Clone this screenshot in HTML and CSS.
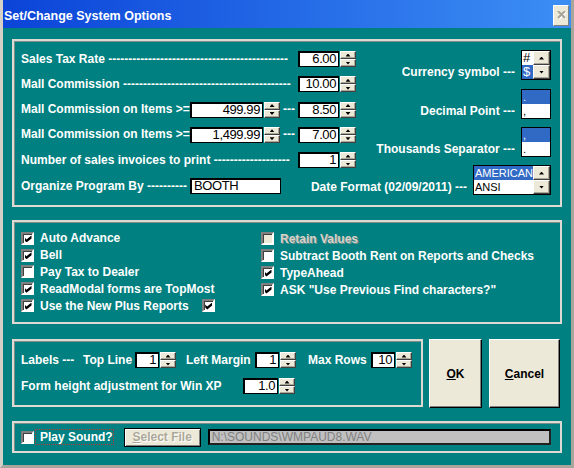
FILE: index.html
```html
<!DOCTYPE html>
<html lang="en">

<head>
    <meta charset="UTF-8">
    <meta name="viewport" content="width=device-width, initial-scale=1.0">
    <title>Set/Change System Options</title>
    <link rel="stylesheet" href="styles.css">
</head>

<body>
    <div class="window">
        <!-- 標題列 -->
        <div class="title-bar">
            <span class="title">Set/Change System Options</span>
            <button type="button" class="close-btn">
                <svg width="9" height="8" viewBox="0 0 9 8">
                    <path d="M1 1 L8 8 M8 1 L1 8" stroke="#fff" stroke-width="2" transform="translate(1 0)" />
                    <path d="M1 0 L8 7 M8 0 L1 7" stroke="#a7a49a" stroke-width="2" />
                </svg>
            </button>
        </div>

        <div class="client">
            <!-- 稅率 / 佣金 -->
            <div class="panel rates">
                <div class="rates-top">
                    <div class="rate-rows">
                        <div class="row">
                            <span class="lbl lbl-full">Sales Tax Rate ---------------------------------------------</span>
                            <span class="num num-s">6.00</span>
                            <span class="spin"><i class="up"></i><i class="dn"></i></span>
                        </div>
                        <div class="row">
                            <span class="lbl lbl-full">Mall Commission ------------------------------------------</span>
                            <span class="num num-s">10.00</span>
                            <span class="spin"><i class="up"></i><i class="dn"></i></span>
                        </div>
                        <div class="row">
                            <span class="lbl lbl-mid">Mall Commission on Items &gt;=</span>
                            <span class="num num-l">499.99</span>
                            <span class="spin"><i class="up"></i><i class="dn"></i></span>
                            <span class="lbl lbl-dash">---</span>
                            <span class="num num-s">8.50</span>
                            <span class="spin"><i class="up"></i><i class="dn"></i></span>
                        </div>
                        <div class="row">
                            <span class="lbl lbl-mid">Mall Commission on Items &gt;=</span>
                            <span class="num num-l">1,499.99</span>
                            <span class="spin"><i class="up"></i><i class="dn"></i></span>
                            <span class="lbl lbl-dash">---</span>
                            <span class="num num-s">7.00</span>
                            <span class="spin"><i class="up"></i><i class="dn"></i></span>
                        </div>
                        <div class="row">
                            <span class="lbl lbl-full">Number of sales invoices to print -------------------</span>
                            <span class="num num-s">1</span>
                            <span class="spin"><i class="up"></i><i class="dn"></i></span>
                        </div>
                    </div>

                    <div class="sep-col">
                        <div class="sep-row">
                            <span class="lbl">Currency symbol ---</span>
                            <div class="list list-s">
                                <div class="items items-big">
                                    <div>#</div>
                                    <div class="sel">$</div>
                                </div>
                                <div class="vscroll"><i class="up"></i><i class="dn"></i></div>
                            </div>
                        </div>
                        <div class="sep-row">
                            <span class="lbl">Decimal Point ---</span>
                            <div class="list list-s">
                                <div class="items">
                                    <div class="sel">.</div>
                                    <div>,</div>
                                </div>
                            </div>
                        </div>
                        <div class="sep-row">
                            <span class="lbl">Thousands Separator ---</span>
                            <div class="list list-s">
                                <div class="items">
                                    <div class="sel">,</div>
                                    <div>.</div>
                                </div>
                            </div>
                        </div>
                    </div>
                </div>

                <div class="rates-bottom">
                    <div class="row organize">
                        <span class="lbl lbl-mid">Organize Program By ----------</span>
                        <span class="text-box">BOOTH</span>
                    </div>
                    <div class="sep-row">
                        <span class="lbl">Date Format (02/09/2011) ---</span>
                        <div class="list list-l">
                            <div class="items">
                                <div class="sel">AMERICAN</div>
                                <div>ANSI</div>
                            </div>
                            <div class="vscroll"><i class="up"></i><i class="dn"></i></div>
                        </div>
                    </div>
                </div>
            </div>

            <!-- 勾選項目 -->
            <div class="panel checks">
                <div class="check-col col-left">
                    <label class="check"><span class="box on"></span>Auto Advance</label>
                    <label class="check"><span class="box on"></span>Bell</label>
                    <label class="check"><span class="box"></span>Pay Tax to Dealer</label>
                    <label class="check"><span class="box on"></span>ReadModal forms are TopMost</label>
                    <label class="check"><span class="box on"></span>Use the New Plus Reports<span class="box on extra"></span></label>
                </div>
                <div class="check-col">
                    <label class="check disabled"><span class="box"></span>Retain Values</label>
                    <label class="check"><span class="box"></span>Subtract Booth Rent on Reports and Checks</label>
                    <label class="check"><span class="box on"></span>TypeAhead</label>
                    <label class="check"><span class="box on"></span>ASK "Use Previous Find characters?"</label>
                </div>
            </div>

            <!-- 標籤設定 + 按鈕 -->
            <div class="bottom-row">
                <div class="panel labels">
                    <div class="row">
                        <span class="lbl lbl-labels">Labels ---</span>
                        <span class="lbl lbl-top">Top Line</span>
                        <span class="num num-xs">1</span>
                        <span class="spin"><i class="up"></i><i class="dn"></i></span>
                        <span class="lbl lbl-left">Left Margin</span>
                        <span class="num num-xs">1</span>
                        <span class="spin"><i class="up"></i><i class="dn"></i></span>
                        <span class="lbl lbl-max">Max Rows</span>
                        <span class="num num-xs">10</span>
                        <span class="spin"><i class="up"></i><i class="dn"></i></span>
                    </div>
                    <div class="row">
                        <span class="lbl lbl-form">Form height adjustment for Win XP</span>
                        <span class="num num-m">1.0</span>
                        <span class="spin"><i class="up"></i><i class="dn"></i></span>
                    </div>
                </div>
                <button type="button" class="cmd cmd-ok"><u>O</u>K</button>
                <button type="button" class="cmd cmd-cancel"><u>C</u>ancel</button>
            </div>

            <!-- 音效 -->
            <div class="panel sound">
                <span class="box"></span>
                <span class="focus">Play Sound?</span>
                <button type="button" class="select-btn"><u>S</u>elect File</button>
                <span class="path-box">N:\SOUNDS\WMPAUD8.WAV</span>
            </div>
        </div>
    </div>
</body>

</html>
```

FILE: styles.css
```css
* {
    box-sizing: border-box;
    margin: 0px;
    padding: 0px;
}

body {
    font-family: "Liberation Sans", Arial, sans-serif;
    background-color: #fff;
}

/* 視窗外框 */
.window {
    width: 574px;
    height: 468px;
    background-color: #008080;
    border: 3px solid #d4d0c8;
    border-top: 0px;
    border-right-color: #a9a59d;
    border-bottom-color: #a9a59d;
}

/* 標題列 */
.title-bar {
    height: 28px;
    display: flex;
    align-items: center;
    justify-content: space-between;
    padding: 0px 2px 0px 1px;
    background: linear-gradient(to right, #0b44d8, #3c8ef4);
}

.title {
    color: #fff;
    font-size: 12.5px;
    font-weight: bold;
    padding-top: 3px;
}

.close-btn {
    width: 16px;
    height: 21px;
    margin-top: 2px;
    display: flex;
    align-items: center;
    justify-content: center;
    background-color: #ece9d8;
    border: 1px solid;
    border-color: #fff #808080 #808080 #fff;
}

.client {
    padding: 11px 9px 12px;
}

/* 群組框 */
.panel {
    border: 2px solid #dcdad2;
    box-shadow: inset 1px 1px 0 #7d8e8c;
}

.lbl {
    color: #fff;
    font-size: 12px;
    font-weight: bold;
    line-height: 15px;
    white-space: nowrap;
    overflow: hidden;
}

.row {
    display: flex;
    align-items: center;
    height: 16px;
}

/* 數字框 */
.num,
.text-box {
    height: 16px;
    background-color: #fff;
    border-style: solid;
    border-width: 2px 1px 1px 2px;
    border-color: #000;
    font-size: 13px;
    letter-spacing: -0.4px;
    line-height: 12px;
    color: #000;
    text-align: right;
    padding-right: 2px;
}

.num-xs { width: 24px; }
.num-s { width: 41px; }
.num-m { width: 35px; }
.num-l { width: 73px; }

.text-box {
    width: 91px;
    text-align: left;
    padding-left: 2px;
}

/* 上下鈕 */
.spin {
    width: 16px;
    height: 16px;
    margin-left: 1px;
    display: flex;
    flex-direction: column;
}

.spin i,
.vscroll i {
    flex: 1;
    display: flex;
    align-items: center;
    justify-content: center;
    background-color: #ece9d8;
    border: 1px solid;
    border-color: #fff #404040 #404040 #fff;
    box-shadow: inset -1px -1px 0 #aca899;
}

.spin i::before,
.vscroll i::before {
    content: "";
    width: 5px;
    height: 3px;
    background-color: #000;
}

.up::before {
    clip-path: polygon(50% 0, 100% 100%, 0 100%);
}

.dn::before {
    clip-path: polygon(0 0, 100% 0, 50% 100%);
}

/* 稅率區 */
.rates {
    height: 168px;
    padding: 9px 9px 10px 7px;
}

.rates-top {
    display: flex;
    justify-content: space-between;
    align-items: flex-start;
}

.rate-rows {
    margin-top: 1px;
    display: flex;
    flex-direction: column;
    gap: 9.25px;
}

.lbl-full { width: 277px; }
.lbl-mid { width: 169px; }

.lbl-dash {
    width: 18px;
    padding-left: 3px;
}

.sep-col {
    display: flex;
    flex-direction: column;
    align-items: flex-end;
    gap: 8.5px;
}

.sep-row {
    display: flex;
    align-items: flex-end;
    gap: 6px;
}

.rates-bottom {
    margin-top: -3px;
    display: flex;
    justify-content: space-between;
    align-items: flex-end;
}

.organize {
    margin-bottom: 1px;
}

/* 清單框 */
.list {
    height: 30px;
    display: flex;
    background-color: #fff;
    border: 1px solid #000;
}

.list-s { width: 30px; }
.list-l { width: 78px; }

.items {
    flex: 1;
    font-size: 11px;
    line-height: 14px;
    color: #000;
}

.items-big {
    font-size: 13px;
}

.items div {
    height: 14px;
    padding-left: 1px;
}

.items .sel {
    background-color: #316ac5;
    color: #fff;
}

.vscroll {
    width: 17px;
    display: flex;
    flex-direction: column;
}

/* 勾選框 */
.checks {
    height: 104px;
    margin-top: 13px;
    padding: 8px 7px;
    display: flex;
}

.check-col {
    display: flex;
    flex-direction: column;
}

.col-left {
    width: 240px;
}

.check {
    height: 17px;
    display: flex;
    align-items: center;
    gap: 6px;
    color: #fff;
    font-size: 12px;
    font-weight: bold;
    white-space: nowrap;
}

.box {
    width: 13px;
    height: 13px;
    flex: none;
    display: flex;
    align-items: center;
    justify-content: center;
    background-color: #fff;
    border: 2px solid;
    border-color: #808080 #fff #fff #808080;
    box-shadow: inset 1px 1px 0 #404040;
}

.box.on::before {
    content: "";
    width: 7px;
    height: 7px;
    margin: 1px 0px 0px 1px;
    background-color: #000;
    clip-path: polygon(0 28%, 28% 57%, 100% 0, 100% 43%, 28% 100%, 0 71%);
}

.box.extra {
    margin-left: 7px;
}

.check.disabled {
    color: #d6d3ca;
    text-shadow: 1px 1px 0 #7f8f8d;
}

.check.disabled .box {
    background-color: #ece9d8;
}

/* 標籤設定 + 按鈕 */
.bottom-row {
    margin-top: 15px;
    height: 69px;
    display: flex;
    gap: 6px;
}

.labels {
    width: 411px;
    height: 68px;
    padding: 11px 7px 0px;
    display: flex;
    flex-direction: column;
    gap: 10px;
}

.lbl-labels { width: 62px; }
.lbl-top { width: 52px; }

.lbl-left {
    width: 69px;
    margin-left: 10px;
}

.lbl-max {
    width: 63px;
    margin-left: 12px;
}

.lbl-form { width: 222px; }

.cmd {
    height: 69px;
    background-color: #ece9d8;
    border: 1px solid;
    border-color: #fff #000 #000 #fff;
    box-shadow: inset -1px -1px 0 #808080;
    font-family: "Liberation Sans", Arial, sans-serif;
    font-size: 12px;
    font-weight: bold;
    color: #000;
}

.cmd-ok { width: 53px; }

.cmd-cancel {
    width: 71px;
    margin-left: 1px;
}

/* 音效 */
.sound {
    height: 32px;
    margin-top: 13px;
    padding: 0px 7px;
    display: flex;
    align-items: center;
}

.focus {
    height: 16px;
    margin-left: 1px;
    padding-left: 4px;
    border: 1px dotted #b03a3a;
    color: #fff;
    font-size: 12px;
    font-weight: bold;
    line-height: 14px;
}

.select-btn {
    width: 77px;
    height: 19px;
    margin-left: 10px;
    background-color: #ece9d8;
    border: 1px solid #000;
    box-shadow: inset 1px 1px 0 #fff, inset -1px -1px 0 #808080;
    font-family: "Liberation Sans", Arial, sans-serif;
    font-size: 12px;
    font-weight: bold;
    color: #aca899;
    text-shadow: 1px 1px 0 #fff;
}

.path-box {
    width: 343px;
    height: 16px;
    margin-left: 7px;
    background-color: #c0c0c0;
    border: 2px solid;
    border-color: #000 #222 #222 #000;
    color: #808080;
    font-size: 12px;
    line-height: 12px;
    padding-left: 2px;
}
```
